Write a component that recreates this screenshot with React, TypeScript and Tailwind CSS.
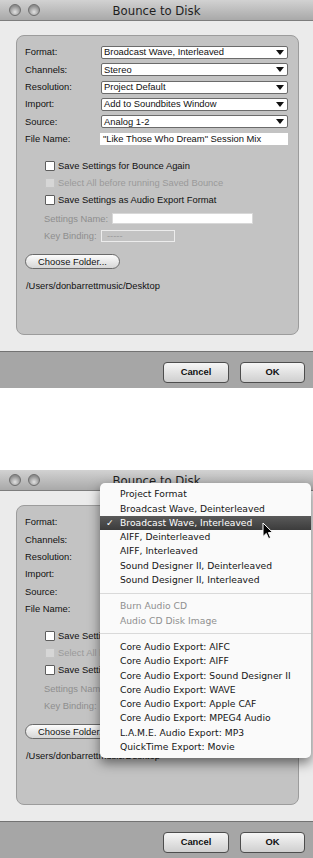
import React from 'react';

const popupRows: [string, string][] = [
  ['Format:', 'Broadcast Wave, Interleaved'],
  ['Channels:', 'Stereo'],
  ['Resolution:', 'Project Default'],
  ['Import:', 'Add to Soundbites Window'],
  ['Source:', 'Analog 1-2'],
];

type MenuEntry = { label: string; checked?: boolean; disabled?: boolean } | 'sep';

const menuEntries: MenuEntry[] = [
  { label: 'Project Format' },
  { label: 'Broadcast Wave, Deinterleaved' },
  { label: 'Broadcast Wave, Interleaved', checked: true },
  { label: 'AIFF, Deinterleaved' },
  { label: 'AIFF, Interleaved' },
  { label: 'Sound Designer II, Deinterleaved' },
  { label: 'Sound Designer II, Interleaved' },
  'sep',
  { label: 'Burn Audio CD', disabled: true },
  { label: 'Audio CD Disk Image', disabled: true },
  'sep',
  { label: 'Core Audio Export: AIFC' },
  { label: 'Core Audio Export: AIFF' },
  { label: 'Core Audio Export: Sound Designer II' },
  { label: 'Core Audio Export: WAVE' },
  { label: 'Core Audio Export: Apple CAF' },
  { label: 'Core Audio Export: MPEG4 Audio' },
  { label: 'L.A.M.E. Audio Export: MP3' },
  { label: 'QuickTime Export: Movie' },
];

const PopupBox = ({ value }: { value: string }) => (
  <div className="flex h-[13px] w-[187px] items-center justify-between rounded-[2px] border border-[#6b6b6b] bg-white pl-[2px] pr-[3px] text-[#111]">
    <span>{value}</span>
    <svg width="8" height="5" viewBox="0 0 8 5">
      <path d="M0 0H8L4 5Z" fill="#111" />
    </svg>
  </div>
);

const CheckRow = ({ label, disabled }: { label: string; disabled?: boolean }) => (
  <div className="flex h-[13px] items-center pl-[20px]">
    <span
      className={
        disabled
          ? 'h-[10px] w-[10px] rounded-[1px] border border-[#c4c4c4] bg-[#d6d6d6]'
          : 'h-[10px] w-[10px] rounded-[1px] border border-[#5e5e5e] bg-white'
      }
    />
    <span className={disabled ? 'ml-[3px] text-[#9a9a9a]' : 'ml-[3px] text-[#111]'}>{label}</span>
  </div>
);

// popup menu that drops over the lower window
const FormatMenu = () => (
  <div className="absolute left-[100px] top-[13px] w-[211px] rounded-[5px] bg-[#fafafa] py-[4px] font-['DejaVu_Sans',sans-serif] text-[9.2px] shadow-[0_5px_12px_rgba(0,0,0,0.5)]">
    {menuEntries.map((entry, i) =>
      entry === 'sep' ? (
        <div key={i} className="flex h-[12px] items-center">
          <div className="h-px w-full bg-[#d9d9d9]" />
        </div>
      ) : (
        <div
          key={i}
          className={
            entry.checked
              ? 'flex h-[14.3px] items-center bg-gradient-to-b from-[#5a5a5a] to-[#3c3c3c] text-white'
              : entry.disabled
                ? 'flex h-[14.3px] items-center text-[#8f8f8f]'
                : 'flex h-[14.3px] items-center text-[#151515]'
          }
        >
          <span className="w-[20px] pl-[6px]">{entry.checked ? '✓' : ''}</span>
          <span>{entry.label}</span>
        </div>
      ),
    )}
  </div>
);

const Cursor = () => (
  <svg className="absolute left-[262px] top-[52px]" width="12" height="18" viewBox="0 0 12 18">
    <path d="M1 1V14.5L4.3 11.4L6.6 16.6L8.6 15.7L6.4 10.6H10.8Z" fill="#000" stroke="#fff" strokeWidth="1" />
  </svg>
);

const BounceDialog = ({ showMenu }: { showMenu?: boolean }) => (
  <div className="relative h-[388px] w-[313px] overflow-hidden font-['Liberation_Sans',Arial,sans-serif] text-[9.4px]">
    {/* title bar */}
    <div className="relative flex h-[21px] items-center border-b border-[#7d7d7d] bg-gradient-to-b from-[#d2d2d2] to-[#a9a9a9]">
      <div className="flex gap-[7px] pl-[9px]">
        <span className="h-[12px] w-[12px] rounded-full border border-[#6e6e6e] bg-[radial-gradient(circle_at_50%_70%,#e2e2e2,#8d8d8d_70%)]" />
        <span className="h-[12px] w-[12px] rounded-full border border-[#6e6e6e] bg-[radial-gradient(circle_at_50%_70%,#e2e2e2,#8d8d8d_70%)]" />
      </div>
      <div className="absolute inset-x-0 top-[3px] text-center font-['DejaVu_Sans',sans-serif] text-[11.7px] text-[#1e1e1e]">
        Bounce to Disk
      </div>
    </div>

    {/* body */}
    <div className="h-[330px] bg-[#ebebeb] pl-[16px] pr-[14px] pt-[14px]">
      <div className="flex h-[300px] flex-col rounded-[8px] border border-[#9c9c9c] bg-[#c3c3c3] pl-[8px] pr-[10px] pt-[10px] text-[#111]">
        <div className="flex flex-col gap-[4.3px]">
          {popupRows.map(([label, value]) => (
            <div key={label} className="flex h-[13px] items-center">
              <span className="w-[76px]">{label}</span>
              <PopupBox value={value} />
            </div>
          ))}
          <div className="flex h-[13px] items-center">
            <span className="w-[75px]">File Name:</span>
            <div className="flex h-[12px] w-[188px] items-center bg-white pl-[3px]">
              "Like Those Who Dream" Session Mix
            </div>
          </div>
        </div>

        <div className="mt-[14px] flex flex-col gap-[4px]">
          <CheckRow label="Save Settings for Bounce Again" />
          <CheckRow label="Select All before running Saved Bounce" disabled />
          <CheckRow label="Save Settings as Audio Export Format" />
        </div>

        <div className="mt-[6px] flex h-[13px] items-center pl-[19px] text-[#8e8e8e]">
          <span className="w-[68px]">Settings Name:</span>
          <div className="h-[11px] w-[141px] border border-[#d8d8d8] bg-white" />
        </div>
        <div className="mt-[4px] flex h-[13px] items-center pl-[19px] text-[#8e8e8e]">
          <span className="w-[57px]">Key Binding:</span>
          <div className="flex h-[12px] w-[74px] items-center border border-[#ececec] pl-[5px] text-[#9a9a9a]">
            -----
          </div>
        </div>

        <div className="mt-[12px] flex h-[15px] w-[95px] items-center justify-center rounded-full border border-[#6a6a6a] bg-gradient-to-b from-[#fdfdfd] to-[#d6d6d6] text-[#111]">
          Choose Folder...
        </div>
        <div className="mt-[10px] pl-[1px] text-[#111]">/Users/donbarrettmusic/Desktop</div>
      </div>
    </div>

    {/* button bar */}
    <div className="flex h-[37px] justify-end gap-[11px] border-t border-[#727272] bg-[#a6a6a6] pr-[8px] pt-[10px]">
      <div className="flex h-[21px] w-[66px] items-center justify-center rounded-[4px] border border-[#4d4d4d] bg-gradient-to-b from-[#f6f6f6] to-[#cfcfcf] font-bold text-[#111]">
        Cancel
      </div>
      <div className="flex h-[21px] w-[65px] items-center justify-center rounded-[4px] border border-[#4d4d4d] bg-gradient-to-b from-[#f6f6f6] to-[#cfcfcf] font-bold text-[#111]">
        OK
      </div>
    </div>

    {showMenu && (
      <>
        <FormatMenu />
        <Cursor />
      </>
    )}
  </div>
);

export default function App() {
  return (
    <div className="flex h-[858px] w-[313px] flex-col bg-white">
      <BounceDialog />
      <div className="h-[82px]" />
      <BounceDialog showMenu />
    </div>
  );
}
